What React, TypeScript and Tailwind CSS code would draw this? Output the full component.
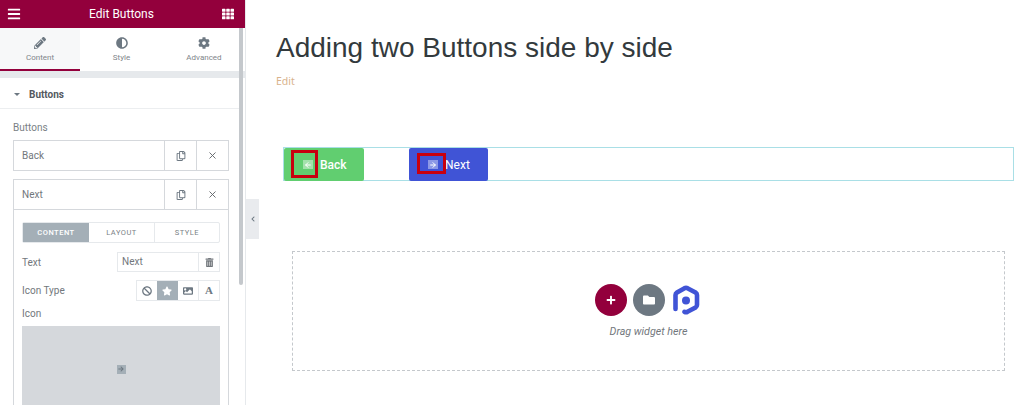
import { FaBars, FaTh, FaPencilAlt, FaAdjust, FaCog, FaRegCopy, FaTrashAlt, FaBan, FaStar, FaImage, FaPlus, FaFolder, FaChevronLeft, FaArrowRight } from 'react-icons/fa';
import { ArrowLeft, ArrowRight, X } from 'lucide-react';

const roboto = "font-['Roboto',sans-serif]";

function RepeaterRow({ label }: { label: string }) {
  return (
    <div className="flex h-[31px] items-stretch border border-[#d5d8dc] bg-white">
      <div className="flex-1 pl-2 text-[10px] leading-[29px] text-[#72777c]">{label}</div>
      <div className="flex w-8 items-center justify-center border-l border-[#d5d8dc]">
        <FaRegCopy className="h-[10px] w-[10px] text-[#6d7882]" />
      </div>
      <div className="flex w-8 items-center justify-center border-l border-[#d5d8dc]">
        <X className="h-[11px] w-[11px] text-[#5f6468]" strokeWidth={2} />
      </div>
    </div>
  );
}

function Tab({ label, width, active, children }: { label: string; width: string; active?: boolean; children: React.ReactNode }) {
  return (
    <div className={`flex flex-col items-center pt-[9px] text-[#6d7882] ${width} ${active ? 'border-b-2 border-[#93003c] bg-[#f7f8f9]' : ''}`}>
      <div className="flex h-3 items-center text-[12px]">{children}</div>
      <span className="mt-[4px] text-[8px] leading-[10px] text-[#80858a]">{label}</span>
    </div>
  );
}

function Sidebar() {
  return (
    <div className={`${roboto} relative flex h-[405px] w-[246px] shrink-0 flex-col overflow-hidden border-r border-[#e6e9ec] bg-white`}>
      <div className="flex h-7 shrink-0 items-center justify-between bg-[#93003c] pl-[7px] pr-[11px] text-white">
        <FaBars className="h-[14px] w-[14px]" />
        <span className="text-[12px]">Edit Buttons</span>
        <FaTh className="h-[12px] w-[12px]" />
      </div>
      <div className="flex h-[43px] shrink-0">
        <Tab label="Content" width="w-[80px]" active>
          <FaPencilAlt />
        </Tab>
        <Tab label="Style" width="w-[83px]">
          <FaAdjust />
        </Tab>
        <Tab label="Advanced" width="w-[82px]">
          <FaCog />
        </Tab>
      </div>
      <div className="h-[7px] w-[245px] shrink-0 bg-[#e6e9ec]" />
      <div className="w-[239px]">
        <div className="flex h-[31px] items-center border-b border-[#eceef0] pl-[14px] pt-[2px]">
          <span className="mr-[9px] h-0 w-0 border-x-[3px] border-t-[3px] border-x-transparent border-t-[#6d7882]" />
          <span className="text-[10px] font-bold text-[#54595f]">Buttons</span>
        </div>
        <div className="px-[13px] pt-[13px]">
          <div className="text-[10px] leading-[12px] text-[#7a7f85]">Buttons</div>
          <div className="mr-[-3px] mt-[6px]">
            <RepeaterRow label="Back" />
          </div>
          <div className="mr-[-3px] mt-2 border-x border-[#d5d8dc]">
            <div className="mx-[-1px]">
              <RepeaterRow label="Next" />
            </div>
            <div className="px-2 pt-[12px]">
              <div className="flex h-[21px] rounded-[2px] border border-[#e6e9ec] text-center text-[7.5px] leading-[19px] tracking-[0.5px] text-[#7a7f85]">
                <div className="w-[66px] bg-[#a4afb7] font-medium text-white">CONTENT</div>
                <div className="w-[66px] border-r border-[#e6e9ec]">LAYOUT</div>
                <div className="flex-1">STYLE</div>
              </div>
              <div className="mt-[9px] flex items-center justify-between">
                <span className="text-[10px] text-[#72777c]">Text</span>
                <div className="flex h-5 w-[103px] border border-[#e6e9ec] text-[10px] leading-[18px] text-[#72777c]">
                  <div className="flex-1 pl-[4px]">Next</div>
                  <div className="flex w-[21px] items-center justify-center border-l border-[#e6e9ec]">
                    <FaTrashAlt className="h-[9px] w-[9px]" />
                  </div>
                </div>
              </div>
              <div className="mt-[8px] flex items-center justify-between">
                <span className="text-[10px] text-[#72777c]">Icon Type</span>
                <div className="flex h-[21px] w-[84px] border border-[#e6e9ec] text-[#6d7882]">
                  <div className="flex flex-1 items-center justify-center">
                    <FaBan className="h-[10px] w-[10px]" />
                  </div>
                  <div className="flex flex-1 items-center justify-center bg-[#a4afb7]">
                    <FaStar className="h-[10px] w-[10px] text-white" />
                  </div>
                  <div className="flex flex-1 items-center justify-center border-r border-[#e6e9ec]">
                    <FaImage className="h-[10px] w-[10px]" />
                  </div>
                  <div className="flex-1 text-center font-['Liberation_Serif',serif] text-[11px] font-bold leading-[19px]">A</div>
                </div>
              </div>
              <div className="mt-[7px] text-[10px] leading-[12px] text-[#72777c]">Icon</div>
              <div className="mt-[6px] flex h-[86px] items-center justify-center bg-[#d5d8dc]">
                <div className="flex h-[9px] w-[9px] items-center justify-center bg-[#a4afb7] text-[#6d7882]">
                  <FaArrowRight className="h-[6px] w-[6px]" />
                </div>
              </div>
            </div>
          </div>
        </div>
      </div>
      {/* scrollbar thumb over the panel */}
      <div className="absolute left-[239px] top-7 h-[257px] w-[4px] rounded-b-[2px] bg-[#c4c8cc]" />
    </div>
  );
}

function CanvasButton({ label, width, color, iconBg, weight, icon }: { label: string; width: string; color: string; iconBg: string; weight: string; icon: React.ReactNode }) {
  return (
    <div className={`relative flex h-[33px] items-center rounded-[2px] font-['Roboto',sans-serif] text-[12px] text-white ${width} ${color} ${weight}`}>
      <span className={`ml-[19px] flex h-[9px] w-[10px] items-center justify-center ${iconBg}`}>{icon}</span>
      <span className="ml-[7px]">{label}</span>
    </div>
  );
}

function PrimeLogo() {
  return (
    <svg viewBox="0 0 29 30" className="h-[30px] w-[29px]">
      <path
        d="M3.5 24 V10 Q3.5 8.5 5 7.5 L12.5 3.2 Q14 2.5 15.5 3.2 L23.5 7.5 Q25 8.5 25 10 V20 Q25 21.5 23.5 22.5 L15.5 26.8 Q14 27.5 12.5 26.8"
        fill="none"
        stroke="#4054d6"
        strokeWidth="4.6"
        strokeLinecap="round"
      />
      <circle cx="14" cy="15.5" r="4" fill="#4054d6" />
    </svg>
  );
}

export default function App() {
  return (
    <div className="relative flex h-[405px] w-[1024px] overflow-hidden bg-white">
      <Sidebar />
      <div className="absolute left-[246px] top-[199px] flex h-10 w-[13px] items-center justify-center bg-[#e9ebee] text-[#6d7882]">
        <FaChevronLeft className="h-[6px] w-[6px]" />
      </div>
      <div className="min-w-0 flex-1 pl-[30px]">
        <h1 className="mt-[31px] font-['Liberation_Sans',sans-serif] text-[28px] leading-[34px] text-[#333a3d]">
          Adding two Buttons side by side
        </h1>
        <div className="mt-[9px] font-['Noto_Sans',sans-serif] text-[10.5px] leading-[14px] text-[#d9b38c]">Edit</div>
        <div className="ml-[7px] mt-[59px] flex h-[34px] w-[731px] items-start gap-[45px] border border-[#a9dfe6]">
          <div className="relative">
            <CanvasButton label="Back" width="w-[80px]" color="bg-[#61ce70]" iconBg="bg-[#a3e2ab]" weight="font-medium" icon={<ArrowLeft className="h-2 w-2" strokeWidth={3} />} />
            <div className="absolute left-[7px] top-[2px] h-[28px] w-[27px] border-[3px] border-[#c8000f]" />
          </div>
          <div className="relative">
            <CanvasButton label="Next" width="w-[79px]" color="bg-[#4054d6]" iconBg="bg-[#8c98e6]" weight="font-normal" icon={<ArrowRight className="h-2 w-2" strokeWidth={3} />} />
            <div className="absolute left-[8px] top-[5px] h-[21px] w-[29px] border-[3px] border-[#c8000f]" />
          </div>
        </div>
        <div className="ml-[16px] mt-[70px] flex h-[120px] w-[713px] flex-col items-center border border-dashed border-[#c4c8cc] pt-[32px]">
          <div className="mr-[2px] flex items-center">
            <div className="flex h-8 w-8 items-center justify-center rounded-full bg-[#93003c] text-white">
              <FaPlus className="h-[10px] w-[10px]" />
            </div>
            <div className="ml-[6px] flex h-8 w-8 items-center justify-center rounded-full bg-[#6d7882] text-white">
              <FaFolder className="h-[12px] w-[12px]" />
            </div>
            <div className="ml-[7px]">
              <PrimeLogo />
            </div>
          </div>
          <div className="mt-[9px] font-['Roboto',sans-serif] text-[10.7px] italic leading-[14px] text-[#72777c]">Drag widget here</div>
        </div>
      </div>
    </div>
  );
}
